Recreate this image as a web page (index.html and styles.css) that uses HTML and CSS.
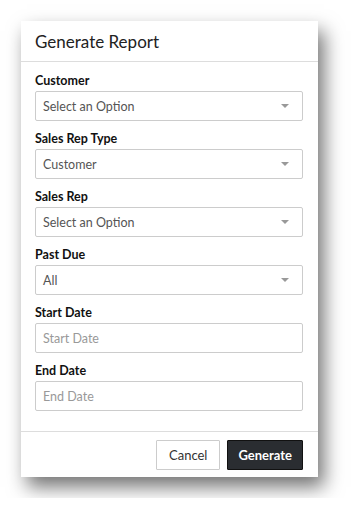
FILE: index.html
```html
<!DOCTYPE html>
<html lang="en">
<head>
    <meta charset="UTF-8">
    <meta name="viewport" content="width=device-width, initial-scale=1.0">
    <title>Generate Report</title>
    <link rel="stylesheet" href="styles.css">
</head>
<body>
    <!-- Report dialog -->
    <div class="dialog">
        <div class="dialog-header">
            <h2>Generate Report</h2>
        </div>

        <form class="dialog-body">
            <label>Customer</label>
            <div class="select">Select an Option<span class="caret"></span></div>

            <label>Sales Rep Type</label>
            <div class="select">Customer<span class="caret"></span></div>

            <label>Sales Rep</label>
            <div class="select">Select an Option<span class="caret"></span></div>

            <label>Past Due</label>
            <div class="select">All<span class="caret"></span></div>

            <label for="start">Start Date</label>
            <input type="text" id="start" placeholder="Start Date">

            <label for="end">End Date</label>
            <input type="text" id="end" placeholder="End Date">
        </form>

        <div class="dialog-footer">
            <button type="button" class="btn">Cancel</button>
            <button type="button" class="btn btn-dark">Generate</button>
        </div>
    </div>
</body>
</html>
```

FILE: styles.css
```css
/* Page */
body {
    margin: 0;
    padding: 21px;
    background-color: #fff;
    font-family: Lato, "Open Sans", sans-serif;
    color: #222;
}

/* Dialog box */
.dialog {
    width: 297px;
    background-color: #fff;
    box-shadow: 6px 10px 18px rgba(0, 0, 0, 0.55);
}

.dialog-header {
    height: 40px;
    padding: 0 14px;
    border-bottom: 1px solid #ddd;
    display: flex;
    align-items: center;
}

.dialog-header h2 {
    margin: 0;
    font-size: 17px;
    font-weight: normal;
    color: #222;
}

.dialog-body {
    padding: 13px 15px 8px 14px;
}

label {
    display: block;
    font-size: 12.5px;
    font-weight: bold;
    color: #111;
    line-height: 12px;
    margin-bottom: 4px;
}

.select,
input {
    display: flex;
    align-items: center;
    width: 100%;
    height: 30px;
    box-sizing: border-box;
    padding: 0 7px;
    margin: 0 0 12px;
    border: 1px solid #ccc;
    border-radius: 2px;
    font-family: inherit;
    font-size: 12.5px;
    color: #555;
    background-color: #fff;
}

.select .caret {
    margin-left: auto;
    margin-right: 6px;
    width: 0;
    height: 0;
    border-left: 4px solid transparent;
    border-right: 4px solid transparent;
    border-top: 4px solid #999;
}

input::placeholder {
    color: #999;
}

/* Footer buttons */
.dialog-footer {
    border-top: 1px solid #ddd;
    padding: 8px 15px 7px;
    display: flex;
    justify-content: flex-end;
    gap: 7px;
}

.btn {
    height: 30px;
    padding: 0 12px;
    border: 1px solid #ccc;
    border-radius: 1px;
    background-color: #fff;
    font-family: inherit;
    font-size: 13px;
    color: #333;
}

.btn-dark {
    padding: 0 10px;
    background-color: #2a2d31;
    border-color: #111;
    color: #fff;
    font-weight: bold;
}
```
